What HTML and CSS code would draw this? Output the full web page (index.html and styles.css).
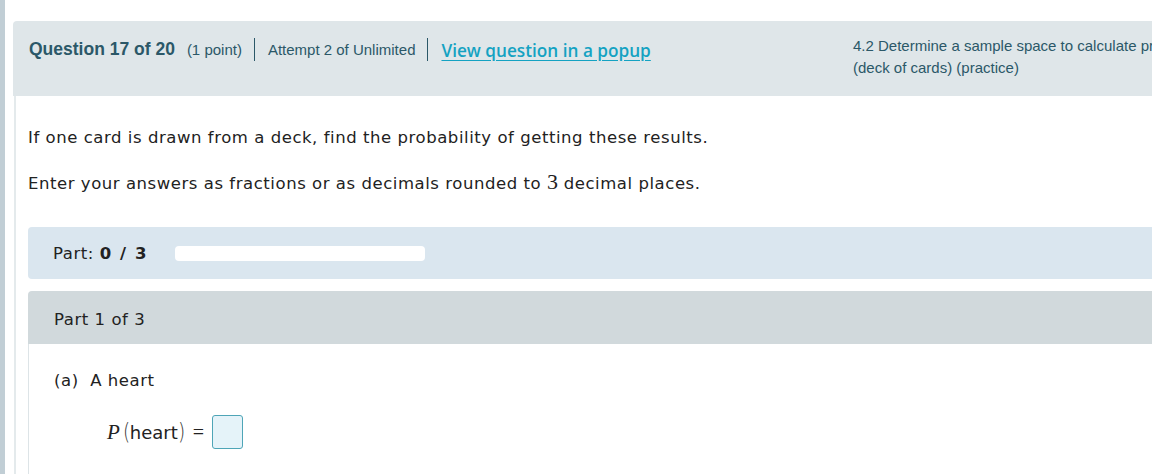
FILE: index.html
```html
<!DOCTYPE html>
<html>
<head>
<meta charset="utf-8">
<link rel="stylesheet" href="styles.css">
</head>
<body>
<div class="rail"></div>
<div class="main">
  <div class="qhead">
    <div class="qmeta">
      <span class="qnum">Question 17 of 20</span>
      <span class="qpts">(1 point)</span>
      <span class="sep"></span>
      <span class="qatt">Attempt 2 of Unlimited</span>
      <span class="sep"></span>
      <a class="popup" href="#">View question in a popup</a>
    </div>
    <div class="qtopic">4.2 Determine a sample space to calculate probability<br>(deck of cards) (practice)</div>
  </div>
  <div class="qbody">
    <p class="para first">If one card is drawn from a deck, find the probability of getting these results.</p>
    <p class="para">Enter your answers as fractions or as decimals rounded to <span class="mnum">3</span> decimal places.</p>
    <div class="progress">
      <span class="plabel">Part: <b>0 / 3</b></span>
      <span class="pbar"></span>
    </div>
    <div class="part">
      <div class="parthead">Part 1 of 3</div>
      <div class="partbody">
        <p class="sub">(a)&nbsp; A heart</p>
        <div class="eq">
          <span class="mi">P</span><span class="paren">(</span><span class="mtext">heart</span><span class="paren">)</span><span class="eqs">=</span><span class="ans"></span>
        </div>
      </div>
    </div>
  </div>
</div>
</body>
</html>
```
FILE: styles.css
```css
html, body {
  margin: 0;
  padding: 0;
  overflow: hidden;
  background: #ffffff;
}
body {
  display: flex;
  min-height: 474px;
  font-family: "DejaVu Sans", Verdana, sans-serif;
  color: #222;
}
.rail {
  flex: none;
  width: 5px;
  background: #c1ced5;
}
.main {
  flex: 1;
  min-width: 0;
  padding: 21px 0 0 8px;
}
.qhead {
  height: 75px;
  background: #dfe6e9;
  border-radius: 4px 0 0 0;
  display: flex;
  padding-left: 16px;
  overflow: hidden;
  font-family: "Liberation Sans", Arial, sans-serif;
  color: #2b5868;
}
.qmeta {
  flex: none;
  width: 824px;
  display: flex;
  align-items: center;
  height: 22px;
  margin-top: 17px;
}
.qnum {
  font-weight: bold;
  font-size: 17.5px;
  margin-right: 12px;
}
.qpts {
  font-size: 15px;
}
.sep {
  width: 1px;
  height: 23px;
  background: #2b5868;
  margin: 1px 13px 0 12px;
}
.qatt {
  font-size: 15px;
}
.popup {
  font-family: "Open Sans", sans-serif;
  font-weight: 600;
  font-size: 17.2px;
  color: #14a2c2;
  text-decoration: underline;
  text-underline-offset: 3px;
  margin-top: 2px;
}
.qtopic {
  flex: none;
  white-space: nowrap;
  font-size: 15px;
  line-height: 22px;
  margin-top: 14px;
}
.qbody {
  margin-left: 1px;
  border-left: 2px solid #e4eaec;
  padding: 30px 0 0 12px;
  min-height: 360px;
}
.para {
  margin: 0 0 21px 0;
  font-size: 16.5px;
  letter-spacing: 0.55px;
  line-height: 24px;
}
.mnum {
  font-family: "Liberation Serif", "Times New Roman", serif;
  font-size: 22px;
  letter-spacing: 0;
  line-height: 1;
}
.progress {
  margin-top: 31px;
  height: 52px;
  background: #dae6ef;
  border-radius: 4px 0 0 4px;
  display: flex;
  align-items: center;
  padding-left: 25px;
}
.plabel {
  font-size: 16.5px;
  letter-spacing: 0.55px;
}
.plabel b {
  letter-spacing: 1.6px;
}
.pbar {
  width: 250px;
  height: 15px;
  background: #ffffff;
  border-radius: 4px;
  margin-left: 27px;
}
.part {
  margin-top: 12px;
}
.parthead {
  height: 53px;
  box-sizing: border-box;
  padding-top: 3px;
  background: #d1d9dc;
  border-radius: 4px 0 0 0;
  display: flex;
  align-items: center;
  padding-left: 26px;
  font-size: 16.5px;
  letter-spacing: 0.55px;
}
.partbody {
  border-left: 1px solid #dde4e7;
  padding: 25px 0 30px 25px;
}
.sub {
  margin: 0;
  font-size: 16.5px;
  letter-spacing: 0.55px;
  line-height: 24px;
}
.eq {
  display: flex;
  align-items: center;
  margin: 22px 0 0 53px;
  height: 34px;
}
.mi {
  font-family: "Liberation Serif", "Times New Roman", serif;
  font-style: italic;
  font-size: 21px;
  margin-right: 3px;
}
.paren {
  font-family: "DejaVu Sans", sans-serif;
  font-weight: 200;
  font-size: 23px;
  color: #333;
  transform: scaleX(0.8);
  margin: 0 -1px;
}
.mtext {
  font-size: 18px;
}
.eqs {
  font-family: "Liberation Serif", serif;
  font-size: 20px;
  margin: 0 8px 0 8px;
}
.ans {
  width: 29px;
  height: 32px;
  border: 1px solid #4ea5b7;
  border-radius: 3px;
  background: #e5f3f9;
}
```
